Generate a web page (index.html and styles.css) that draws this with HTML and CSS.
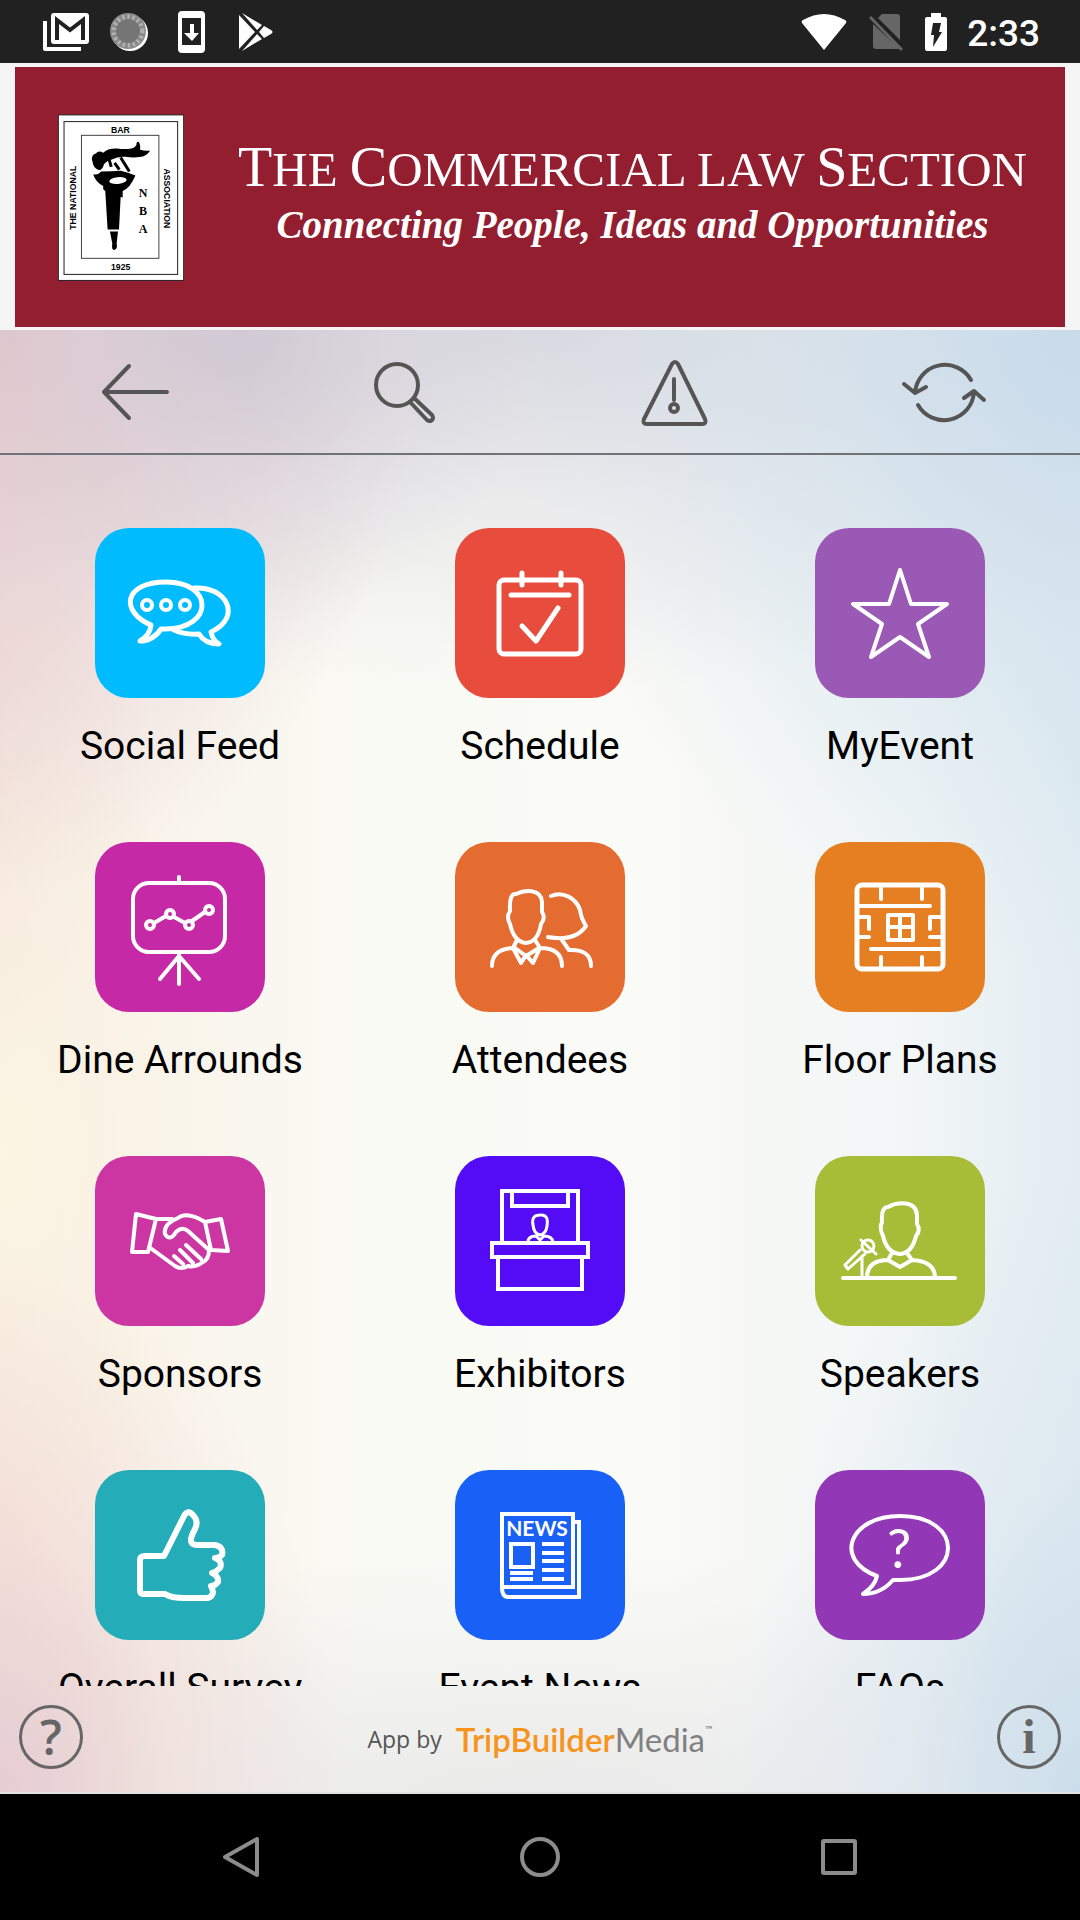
FILE: index.html
```html
<!DOCTYPE html>
<html lang="en">
  <head>
    <meta charset="utf-8" />
    <meta name="viewport" content="width=device-width, initial-scale=1" />
    <title>The Commercial Law Section</title>
    <link rel="stylesheet" href="styles.css">
  </head>
  <body>
    <div class="app">
      <!-- Status bar -->
      <div class="status-bar">
        <div class="status-group status-left">
          <svg width="46" height="40" viewBox="0 0 46 40">
            <path d="M2 9v28h36" fill="none" stroke="#fff" stroke-width="4" stroke-linejoin="round" />
            <rect x="8" y="1" width="38" height="31" rx="3" fill="#fff" />
            <path d="M14 28V8l13 10L40 8v20" fill="none" stroke="#212121" stroke-width="4" />
          </svg>
          <svg width="40" height="40" viewBox="0 0 40 40">
            <circle cx="20" cy="21" r="18" fill="#fff" />
            <circle cx="18" cy="19" r="18" fill="#8a8a8a" />
            <circle cx="18" cy="19" r="14" fill="none" stroke="#b5b5b5" stroke-width="5" stroke-dasharray="2 3" />
            <circle cx="18" cy="19" r="12" fill="#757575" />
          </svg>
          <svg width="28" height="42" viewBox="0 0 28 42">
            <rect width="27" height="42" rx="4" fill="#fff" />
            <path d="M4 7h19v27H4z" fill="#212121" />
            <path d="M12 13h4v9h5l-7 8-8-8h6z" fill="#fff" />
          </svg>
          <svg width="36" height="38" viewBox="0 0 36 38">
            <path d="M1 2l16 17L1 36zM4 0l20 12-5 5zM4 38l15-17 5 5zM26 13l7 4q3 2 0 4l-7 4-5-6z" fill="#fff" />
          </svg>
        </div>
        <div class="status-group status-right">
          <svg width="46" height="38" viewBox="0 0 46 38">
            <path d="M23 37L1 10Q0 8 2 7 23-5 44 7q2 1 1 3z" fill="#fff" />
          </svg>
          <svg width="36" height="38" viewBox="0 0 36 38">
            <path d="M13 1h15q3 0 3 3v23L9 5zM4 11l27 25H7q-3 0-3-3z" fill="#666" />
            <path d="M1 4l32 33" stroke="#666" stroke-width="3" />
          </svg>
          <svg width="22" height="38" viewBox="0 0 22 38">
            <path d="M6 0h10v4h4q2 0 2 2v30q0 2-2 2H2q-2 0-2-2V6q0-2 2-2h4z" fill="#fff" />
            <path d="M8 10h8l-2 9h3L8 34l1-12H6z" fill="#212121" />
          </svg>
          <span class="clock">2:33</span>
        </div>
      </div>

      <!-- Section banner -->
      <header class="banner">
        <svg class="emblem" viewBox="25 43 376 497">
          <rect x="26" y="45" width="374" height="494" fill="#fff" stroke="#222" stroke-width="3" />
          <rect x="43" y="65" width="339" height="456" fill="none" stroke="#222" stroke-width="3" />
          <rect x="95" y="106" width="231" height="367" fill="none" stroke="#444" stroke-width="3" />
          <g class="emblem-text">
            <text x="211" y="98">BAR</text>
            <text x="212" y="507">1925</text>
            <text transform="translate(78 292) rotate(-90)">THE NATIONAL</text>
            <text transform="translate(340 294) rotate(90)">ASSOCIATION</text>
          </g>
          <g class="emblem-initials">
            <text x="279" y="290">N</text>
            <text x="279" y="344">B</text>
            <text x="279" y="398">A</text>
          </g>
          <path d="M126 178q0-16 12-18 8-10 22-2 12-14 42-13 20 4 42 0 16-4 16-18 4-4 8 2 4 10 2 20 14 4 30 2-10 18-32 20-20 2-42-1-22-2-40 8-16 4-24 14-2 14-14 18-20-8-20-26z" />
          <path d="M130 222q14 4 24-8 30 0 58-2 24 6 44 14-16 38-38 46v20l-6-3-5 98h-34l-7-116q-8-2-6-14-22-10-30-35z" />
          <path d="M212 172l26 42M178 180l6 20M194 188l14 20" stroke="#000" stroke-width="9" />
          <ellipse cx="204" cy="241" rx="26" ry="10" fill="#fff" transform="rotate(-6 204 241)" />
          <path d="M180 393h24l-4 36q4 18-8 19-8 0-5-19z" />
        </svg>
        <div class="banner-text">
          <h1><span>T</span>he <span>C</span>ommercial law <span>S</span>ection</h1>
          <p>Connecting People, Ideas and Opportunities</p>
        </div>
      </header>

      <div class="screen">
        <!-- Toolbar -->
        <nav class="toolbar">
          <button type="button" aria-label="Back">
            <svg viewBox="0 0 90 90"><path d="M77 45H14M39 19L14 45l25 26" /></svg>
          </button>
          <button type="button" aria-label="Search">
            <svg viewBox="0 0 90 90">
              <circle cx="37" cy="38" r="21" />
              <path d="M54 51l18 17q2 3 0 5t-5 0L50 55" />
            </svg>
          </button>
          <button type="button" aria-label="Alerts">
            <svg viewBox="0 0 90 90">
              <path d="M42 17q3-4 6 0l27 55q2 5-3 5H17q-5 0-3-5zM44 32v21" />
              <circle cx="44" cy="61" r="4" />
            </svg>
          </button>
          <button type="button" aria-label="Refresh">
            <svg viewBox="0 0 90 90">
              <path d="M71 33A30 30 0 0 0 15 46M4 37l11 9 11-6M18 58a30 30 0 0 0 56-13M64 51l10-7 10 9" />
            </svg>
          </button>
        </nav>

        <!-- Event menu -->
        <main class="menu">
          <a class="item" href="#social">
            <svg class="tile sky" viewBox="0 0 170 170">
              <path d="M56 97C25 84 28 54 71 54c48 0 48 46 0 47h-5q-8 12-21 12 10-6 11-16zM99 60c34-2 48 30 17 44q2 9 8 12-14 0-20-10-14 1-25-4" />
              <circle cx="52" cy="77" r="5" /><circle cx="71" cy="77" r="5" /><circle cx="90" cy="77" r="5" />
            </svg>
            <span>Social Feed</span>
          </a>
          <a class="item" href="#schedule">
            <svg class="tile red" viewBox="0 0 170 170">
              <rect x="44" y="52" width="82" height="74" rx="5" />
              <path d="M67 45v12M106 45v12M56 67h58M67 98l14 15 22-33" />
            </svg>
            <span>Schedule</span>
          </a>
          <a class="item" href="#myevent">
            <svg class="tile violet" viewBox="0 0 170 170">
              <path class="medium" d="M85 42l11 34h36l-29 20 11 33-29-20-29 20 11-33-29-20h36z" />
            </svg>
            <span>MyEvent</span>
          </a>

          <a class="item" href="#dine">
            <svg class="tile magenta" viewBox="0 0 170 170">
              <g class="medium">
                <rect x="38" y="41" width="92" height="69" rx="16" />
                <path d="M84 35v6M84 110v32M84 114l-19 23M84 114l20 23M59 81l12-7M79 75l11 6M97 79l13-9" />
                <circle cx="55" cy="83" r="4" /><circle cx="75" cy="72" r="4" />
                <circle cx="94" cy="83" r="4" /><circle cx="114" cy="68" r="4" />
              </g>
            </svg>
            <span>Dine Arrounds</span>
          </a>
          <a class="item" href="#attendees">
            <svg class="tile orange" viewBox="0 0 170 170">
              <g class="medium">
                <path d="M55 69q-1-18 6-17c8-4 25-6 26 8v10q4 6-1 12-3 18-15 19-12-1-16-19-4-7 0-13z" />
                <path d="M62 98l-4 8 8 15 5-8 7 8 7-15-5-8M60 106l11 8 13-8M37 124q0-17 21-18M85 106q22 0 22 18" />
                <path d="M96 54c12-5 25 2 29 14q1 8 6 16-11 16-38 11M107 98l7 10q22-1 22 16" />
              </g>
            </svg>
            <span>Attendees</span>
          </a>
          <a class="item" href="#floor">
            <svg class="tile amber" viewBox="0 0 170 170">
              <rect x="42" y="43" width="86" height="84" rx="5" />
              <path class="medium" d="M66 43v14M107 43v14M66 127v-12M107 127v-12M42 64h73M56 107h72M42 75h12v12M42 95h12M128 75h-13v12M128 95h-13M73 73h25v25H73zM85 73v25M73 85h25" />
            </svg>
            <span>Floor Plans</span>
          </a>

          <a class="item" href="#sponsors">
            <svg class="tile pink" viewBox="0 0 170 170">
              <path class="medium" d="M41 58l20 5-8 33H37zM110 66l16-3 7 32-17-1zM61 63h16M110 66q-18-11-27-4-15 6-13 16 5 8 11-2 6-6 12-1l21 19q0 9-6 12-8 6-15 4-7 4-13 0L54 91M79 100l9 8M85 94l13 13M91 89l15 14" />
            </svg>
            <span>Sponsors</span>
          </a>
          <a class="item" href="#exhibitors">
            <svg class="tile indigo" viewBox="0 0 170 170">
              <path class="square" d="M47 87V35h76v52M57 35v15h56V35M37 87h96v14H37zM43 101v32h84v-32" />
              <path class="thin" d="M78 69q-2-10 7-10 9-1 7 11-1 8-7 9-6-1-7-10zM73 86q0-6 8-6l4 4 4-4q8 0 9 6" />
            </svg>
            <span>Exhibitors</span>
          </a>
          <a class="item" href="#speakers">
            <svg class="tile lime" viewBox="0 0 170 170">
              <g class="medium">
                <path d="M67 66q-1-15 6-15c9-5 28-7 29 8v9q4 6-1 12-4 17-16 18-13-1-17-18-4-8-1-14z" />
                <path d="M77 97l-4 7 12 7 12-7-5-7M52 122q0-18 21-18M97 104q23 1 23 18M28 122h112" />
              </g>
              <g class="thin">
                <circle cx="53" cy="90" r="6" />
                <path d="M46 84l15 14M45 94l-15 15 3 4 17-15M47 100v22" />
              </g>
            </svg>
            <span>Speakers</span>
          </a>

          <a class="item" href="#survey">
            <svg class="tile teal" viewBox="0 0 170 170">
              <path class="bold" d="M50 86h19l20-40q4-7 9-1 6 6 2 14-9 16 2 16h18q9 2 7 10-3 3-7 3 8 3 5 10-4 4-8 5 7 3 6 9-3 4-7 4 5 9-3 12H90q-14 0-20-4H48q-3 0-3-4V90q0-4 5-4z" />
            </svg>
            <span>Overall Survey</span>
          </a>
          <a class="item" href="#news">
            <svg class="tile blue" viewBox="0 0 170 170">
              <path class="square" d="M47 44h71v73H47zM47 117q0 10 6 10h71V52h-6M56 74h22v23H56z" />
              <path class="square" d="M55 103h23M55 109h23M87 74h22M87 83h22M87 91h22M87 100h22M87 109h22" />
              <text class="news-text" x="82" y="66">NEWS</text>
            </svg>
            <span>Event News</span>
          </a>
          <a class="item" href="#faqs">
            <svg class="tile purple" viewBox="0 0 170 170">
              <path class="medium" d="M62 106C18 90 34 46 85 46c64 0 64 64 0 64h-7q-12 14-30 14 12-8 14-18z" />
              <text class="faq-text" x="84" y="98">?</text>
            </svg>
            <span>FAQs</span>
          </a>
        </main>

        <!-- Footer -->
        <footer class="footer">
          <button class="round" type="button" aria-label="Help">?</button>
          <a class="credit" href="#tripbuilder">
            <span class="by">App by</span>
            <span class="brand"><b>TripBuilder</b>Media<sup>™</sup></span>
          </a>
          <button class="round serif" type="button" aria-label="Info">i</button>
        </footer>
      </div>

      <!-- Android navigation -->
      <nav class="system-nav">
        <button type="button" aria-label="System back">
          <svg viewBox="0 0 42 42"><path d="M37 3v36L5 21z" /></svg>
        </button>
        <button type="button" aria-label="Home">
          <svg viewBox="0 0 42 42"><circle cx="21" cy="21" r="18" /></svg>
        </button>
        <button type="button" aria-label="Recent apps">
          <svg viewBox="0 0 42 42"><rect x="5" y="5" width="32" height="32" rx="1" /></svg>
        </button>
      </nav>
    </div>
  </body>
</html>
```
FILE: styles.css
```css
* {
  box-sizing: border-box;
}

body {
  margin: 0;
  font-family: Roboto, "Liberation Sans", sans-serif;
  color: #000;
}

svg {
  display: block;
}

button {
  padding: 0;
  border: none;
  background: none;
  cursor: pointer;
}

a {
  color: inherit;
  text-decoration: none;
}

.app {
  display: flex;
  flex-direction: column;
  height: 100vh;
}

/* Status bar */
.status-bar {
  display: flex;
  justify-content: space-between;
  align-items: center;
  flex: none;
  height: 63px;
  padding: 0 40px 0 43px;
  background-color: #212121;
}

.status-group {
  display: flex;
  align-items: center;
}

.status-left {
  gap: 28px;
}

.status-left svg:nth-child(2) {
  margin-left: -7px;
}

.status-left svg:last-child {
  margin-left: 4px;
}

.status-right {
  gap: 20px;
}

.status-right svg:first-child {
  margin-right: 2px;
}

.clock {
  color: #fff;
  font-size: 37px;
  font-weight: 500;
  line-height: 63px;
  padding-top: 4px;
}

/* Banner */
.banner {
  display: flex;
  align-items: center;
  flex: none;
  height: 267px;
  padding-left: 43px;
  border: solid #f5f5f5;
  border-width: 4px 15px 3px;
  background-color: #921e30;
}

.emblem {
  flex: none;
  width: 126px;
  height: 167px;
}

.banner .emblem-text {
  font-family: "Liberation Sans", sans-serif;
  font-size: 26px;
  font-weight: bold;
  text-anchor: middle;
}

.emblem-initials {
  font-family: "Liberation Serif", serif;
  font-size: 36px;
  font-weight: bold;
  text-anchor: middle;
}

.banner-text {
  flex: 1;
  padding: 0 0 8px 16px;
  color: #fff;
  font-family: "Liberation Serif", serif;
  text-align: center;
  white-space: nowrap;
}

.banner-text h1 {
  margin: 0;
  font-size: 49px;
  font-weight: normal;
  line-height: 60px;
  text-transform: uppercase;
}

.banner-text h1 span {
  font-size: 56px;
}

.banner-text p {
  margin: 0;
  font-size: 39px;
  font-style: italic;
  font-weight: bold;
  line-height: 50px;
}

/* Screen below the banner */
.screen {
  display: flex;
  flex-direction: column;
  flex: 1;
  min-height: 0;
  background:
    radial-gradient(ellipse 300px 300px at 22% 0, rgba(200, 195, 208, 0.7), rgba(205, 198, 210, 0.3) 50%, rgba(210, 200, 212, 0)),
    radial-gradient(ellipse 420px 560px at 0 0, #e1c8ce, rgba(228, 206, 211, 0.6) 50%, rgba(235, 215, 215, 0)),
    radial-gradient(ellipse 560px 640px at 100% 0, #c8dbeb, rgba(206, 224, 236, 0.5) 50%, rgba(220, 232, 240, 0)),
    radial-gradient(ellipse 1000px 360px at 50% 0, #d9d9e0, rgba(226, 226, 230, 0.6) 50%, rgba(236, 236, 236, 0)),
    radial-gradient(ellipse 340px 520px at 0 100%, #e6cdd2, rgba(240, 215, 212, 0.5) 50%, rgba(246, 230, 220, 0)),
    radial-gradient(ellipse 340px 620px at 100% 100%, #ccdeeb, rgba(215, 228, 238, 0.5) 50%, rgba(230, 238, 242, 0)),
    radial-gradient(ellipse 1100px 240px at 50% 100%, rgba(228, 228, 230, 0.7), rgba(236, 236, 236, 0)),
    radial-gradient(ellipse 260px 480px at 0 56%, #fbf5e3, rgba(252, 246, 230, 0)),
    linear-gradient(to right, #f5e4dc, #f9f4ec 14%, #fafaf4 34%, #fafaf7 62%, #f2f6f6 84%, #e2ecf2);
}

.toolbar {
  display: grid;
  grid-template-columns: repeat(4, 1fr);
  justify-items: center;
  align-items: center;
  flex: none;
  height: 125px;
  border-bottom: 2px solid #6e7377;
}

.toolbar svg {
  width: 90px;
  height: 90px;
  fill: none;
  stroke: #555;
  stroke-width: 4;
  stroke-linecap: round;
  stroke-linejoin: round;
}

.menu {
  display: grid;
  grid-template-columns: repeat(3, 1fr);
  align-content: start;
  row-gap: 73px;
  flex: 1;
  min-height: 0;
  padding-top: 73px;
  overflow: hidden;
}

.item {
  display: flex;
  flex-direction: column;
  align-items: center;
  gap: 25px;
  font-size: 39px;
  line-height: 46px;
  white-space: nowrap;
}

.tile {
  width: 170px;
  height: 170px;
  border-radius: 34px;
  fill: none;
  stroke: #fff;
  stroke-width: 5;
  stroke-linecap: round;
  stroke-linejoin: round;
}

.tile circle,
.tile .medium {
  stroke-width: 4;
}

.tile .thin,
.tile .thin circle {
  stroke-width: 3;
}

.tile .bold {
  stroke-width: 6;
}

.tile .square {
  stroke-width: 4;
  stroke-linecap: butt;
  stroke-linejoin: miter;
}

.tile text {
  fill: #fff;
  stroke: none;
  font-family: Lato, sans-serif;
  text-anchor: middle;
}

.news-text {
  font-size: 21px;
  font-weight: bold;
}

.faq-text {
  font-size: 54px;
}

.sky { background-color: #00bcff; }
.red { background-color: #e84c3d; }
.violet { background-color: #9b59b6; }
.magenta { background-color: #c529a5; }
.orange { background-color: #e46c31; }
.amber { background-color: #e67f22; }
.pink { background-color: #cc36a3; }
.indigo { background-color: #540bf5; }
.lime { background-color: #a8bd37; }
.teal { background-color: #24adb8; }
.blue { background-color: #1961f6; }
.purple { background-color: #9237b5; }

/* Footer */
.footer {
  display: flex;
  justify-content: space-between;
  align-items: center;
  flex: none;
  height: 108px;
  padding: 0 19px 4px;
  border-bottom: 2px solid #e4e4e4;
}

.round {
  width: 64px;
  height: 64px;
  border: 3px solid #666;
  border-radius: 50%;
  color: #666;
  font-family: "Open Sans", sans-serif;
  font-size: 48px;
  font-weight: 600;
  line-height: 58px;
}

.serif {
  font-family: "Liberation Serif", serif;
  font-weight: bold;
}

.credit {
  display: flex;
  align-items: center;
  gap: 14px;
  padding-top: 4px;
}

.by {
  color: #555;
  font-family: "Open Sans", sans-serif;
  font-size: 23px;
}

.brand {
  color: #808080;
  font-family: Lato, sans-serif;
  font-size: 33px;
  line-height: 40px;
}

.brand b {
  color: #f7941e;
  font-weight: 600;
}

.brand sup {
  font-size: 10px;
  line-height: 20px;
  vertical-align: top;
}

/* Android navigation */
.system-nav {
  display: flex;
  justify-content: space-around;
  align-items: center;
  flex: none;
  height: 126px;
  padding: 0 92px;
  background-color: #000;
}

.system-nav svg {
  width: 42px;
  height: 42px;
  fill: none;
  stroke: #8c8c8c;
  stroke-width: 4;
  stroke-linejoin: round;
}
```
